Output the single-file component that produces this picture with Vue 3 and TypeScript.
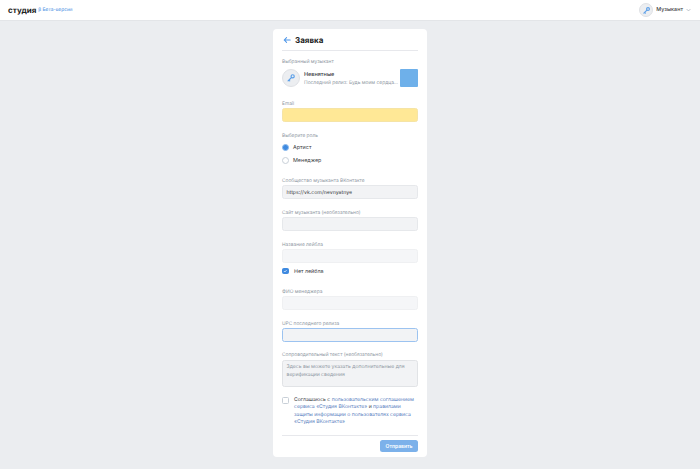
<script setup lang="ts">
const fields = [
  { label: 'Сообщество музыканта ВКонтакте', value: 'https://vk.com/nevnyatnye' },
  { label: 'Сайт музыканта (необязательно)', value: '' },
]
</script>

<template>
  <div class="page">
    <header class="top">
      <div class="brand">
        <span class="logo">студия</span>
        <span class="beta">β Бета-версия</span>
      </div>
      <div class="user">
        <span class="uava">
          <svg viewBox="0 0 12 12" width="9" height="9" fill="none" stroke="#5b9fe8" stroke-width="1.5" stroke-linecap="round">
            <circle cx="8" cy="4" r="1.9" />
            <path d="M6.6 5.4 2.5 9.5M3.5 8.5l1 1" />
          </svg>
        </span>
        <span class="uname">Музыкант</span>
        <svg class="chev" viewBox="0 0 8 5" width="5" height="4" fill="none" stroke="#99a2ad" stroke-width="1"><path d="M1 1l3 3 3-3" /></svg>
      </div>
    </header>

    <main class="card">
      <div class="head">
        <svg viewBox="0 0 10 10" width="8" height="8" fill="none" stroke="#4a94e8" stroke-width="1.3" stroke-linecap="round" stroke-linejoin="round">
          <path d="M9 5H1.5M4.5 2 1.5 5l3 3" />
        </svg>
        <h1>Заявка</h1>
      </div>

      <div class="label first">Выбранный музыкант</div>
      <div class="artist">
        <span class="ava">
          <svg viewBox="0 0 12 12" width="10" height="10" fill="none" stroke="#5b9fe8" stroke-width="1.4" stroke-linecap="round">
            <circle cx="8" cy="4" r="1.9" />
            <path d="M6.6 5.4 2.5 9.5M3.5 8.5l1 1" />
          </svg>
        </span>
        <div class="ainfo">
          <div class="aname">Невнятные</div>
          <div class="arel">Последний релиз: Будь моим сердца…</div>
        </div>
        <span class="cover"></span>
      </div>

      <div class="label l-email">Email</div>
      <div class="input yellow"></div>

      <div class="label l-role">Выберите роль</div>
      <div class="radio r1"><span class="rb on"></span><span class="rt">Артист</span></div>
      <div class="radio r2"><span class="rb"></span><span class="rt">Менеджер</span></div>

      <template v-for="(f, i) in fields" :key="f.label">
        <div class="label" :class="i === 0 ? 'l-comm' : 'l-next'">{{ f.label }}</div>
        <div class="input">{{ f.value }}</div>
      </template>

      <div class="label l-next">Название лейбла</div>
      <div class="input light"></div>
      <div class="check">
        <span class="cb on">
          <svg viewBox="0 0 8 8" width="6" height="6" fill="none" stroke="#fff" stroke-width="1.2"><path d="M1.5 4 3.3 5.8 6.5 2.3" /></svg>
        </span>
        <span class="rt">Нет лейбла</span>
      </div>

      <div class="label l-fio">ФИО менеджера</div>
      <div class="input light"></div>

      <div class="label l-next">UPC последнего релиза</div>
      <div class="input focus"></div>

      <div class="label l-text">Сопроводительный текст (необязательно)</div>
      <div class="area">Здесь вы можете указать дополнительные для верификации сведения</div>

      <div class="agree">
        <span class="cb"></span>
        <p>Соглашаюсь с <a>пользовательским соглашением сервиса «Студия ВКонтакте»</a> и <a>правилами защиты информации о пользователях сервиса «Студия ВКонтакте»</a></p>
      </div>

      <div class="foot"><button type="button">Отправить</button></div>
    </main>
  </div>
</template>

<style>
html, body { margin: 0; background: #ebedf0; }
</style>

<style scoped>
.page {
  min-height: 469px;
  background: #ebedf0;
  font-family: Inter, "Noto Sans", sans-serif;
  text-rendering: geometricPrecision;
  color: #2c2d2e;
  overflow: hidden;
}
.top {
  height: 20px;
  background: #fff;
  border-bottom: 1px solid #e3e5e8;
  display: flex;
  align-items: center;
  justify-content: space-between;
  padding: 0 9px 0 8px;
}
.brand { display: flex; align-items: center; gap: 2px; }
.logo { font-size: 8px; font-weight: 700; color: #222; }
.beta { font-size: 4.8px; color: #5b9be6; font-weight: 500; }
.user { display: flex; align-items: center; }
.uava {
  width: 14px; height: 14px; border-radius: 50%;
  background: #eceef1; border: 0.5px solid #dfe1e5; box-sizing: border-box;
  display: flex; align-items: center; justify-content: center;
  margin-right: 3px;
}
.uname { font-size: 5.4px; color: #45474a; font-weight: 500; }
.chev { margin-left: 3px; }

.card {
  width: 136px;
  margin: 8px auto 12px;
  padding: 0 9px;
  height: 428px;
  background: #fff;
  border-radius: 4px;
}
.head {
  height: 21px;
  border-bottom: 1px solid #e7e8ec;
  display: flex;
  align-items: center;
  gap: 4px;
  padding-left: 1px;
}
h1 { margin: 0; font-size: 8px; font-weight: 700; color: #222; }

.label { font-size: 4.85px; line-height: 8px; color: #8f98a3; height: 6px; margin-bottom: 2px; white-space: nowrap; }
.first { margin-top: 7px; margin-bottom: 5px; }
.artist { display: flex; align-items: center; height: 18px; }
.ava {
  width: 18px; height: 18px; border-radius: 50%;
  background: #eceef1; border: 0.5px solid #dfe1e5; box-sizing: border-box;
  display: flex; align-items: center; justify-content: center;
  margin-right: 4px; flex: none;
}
.ainfo { flex: 1; min-width: 0; padding-top: 2px; }
.aname { font-size: 5.5px; line-height: 8px; font-weight: 500; color: #3a3c3f; }
.arel { font-size: 4.9px; line-height: 8px; color: #8f98a3; white-space: nowrap; }
.cover { width: 18px; height: 18px; background: #6eb0ea; border-radius: 1px; flex: none; margin-left: 6px; }

.l-email { margin-top: 13px; }
.l-role { margin-top: 10px; }
.l-comm { margin-top: 13px; }
.l-next { margin-top: 10px; }
.l-fio { margin-top: 13px; }
.l-text { margin-top: 9px; margin-bottom: 3px; }

.input {
  height: 14px;
  box-sizing: border-box;
  background: #f2f3f5;
  border: 0.5px solid #e6e8eb;
  border-radius: 2.5px;
  font-size: 5.2px;
  line-height: 15px;
  padding-left: 3.5px;
  color: #3a3c3f;
}
.yellow { background: #ffe896; border-color: #f5e4a6; }
.light { background: #f5f6f8; border-color: #eff0f2; }
.focus { background: #f2f3f5; border: 1px solid #9cc3f0; }

.radio { display: flex; align-items: center; font-size: 5.4px; height: 8px; gap: 4px; color: #3a3c3f; }
.rt { padding-top: 2px; }
.r1 { margin-top: 5px; }
.r2 { margin-top: 5px; }
.rb {
  width: 7px; height: 7px; box-sizing: border-box; border-radius: 50%;
  border: 0.6px solid #c8cfd7; flex: none; background: #fff;
}
.rb.on { border: 0.6px solid #8dbbee; background: #3f8ae0; }

.check { display: flex; align-items: center; gap: 5.5px; font-size: 5.3px; margin-top: 4px; height: 8px; color: #3a3c3f; }
.cb {
  width: 6.5px; height: 6.5px; box-sizing: border-box; border-radius: 1.5px;
  border: 0.6px solid #c8cfd7; background: #fff; flex: none;
  display: flex; align-items: center; justify-content: center;
}
.cb.on { background: #3f8ae0; border-color: #3f8ae0; }

.area {
  height: 27px;
  box-sizing: border-box;
  background: #f2f3f5;
  border: 0.5px solid #e1e3e6;
  border-radius: 2.5px;
  padding: 3px 3.5px;
  font-size: 5.1px;
  line-height: 7.5px;
  color: #8f98a3;
}
.agree { display: flex; gap: 5.5px; margin-top: 10px; padding-bottom: 8.8px; border-bottom: 1px solid #e7e8ec; }
.agree p { margin: 0; font-size: 5.1px; line-height: 7.3px; color: #3a3c3f; width: 124px; flex: none; }
.agree a { color: #5a80c0; }
.foot { display: flex; justify-content: flex-end; margin-top: 4px; }
button {
  width: 38px; height: 12px; padding: 0; border: 0; border-radius: 2.5px;
  background: #7cb1ea; color: #fff; font: 600 5px Inter, "Noto Sans", sans-serif;
}
</style>
